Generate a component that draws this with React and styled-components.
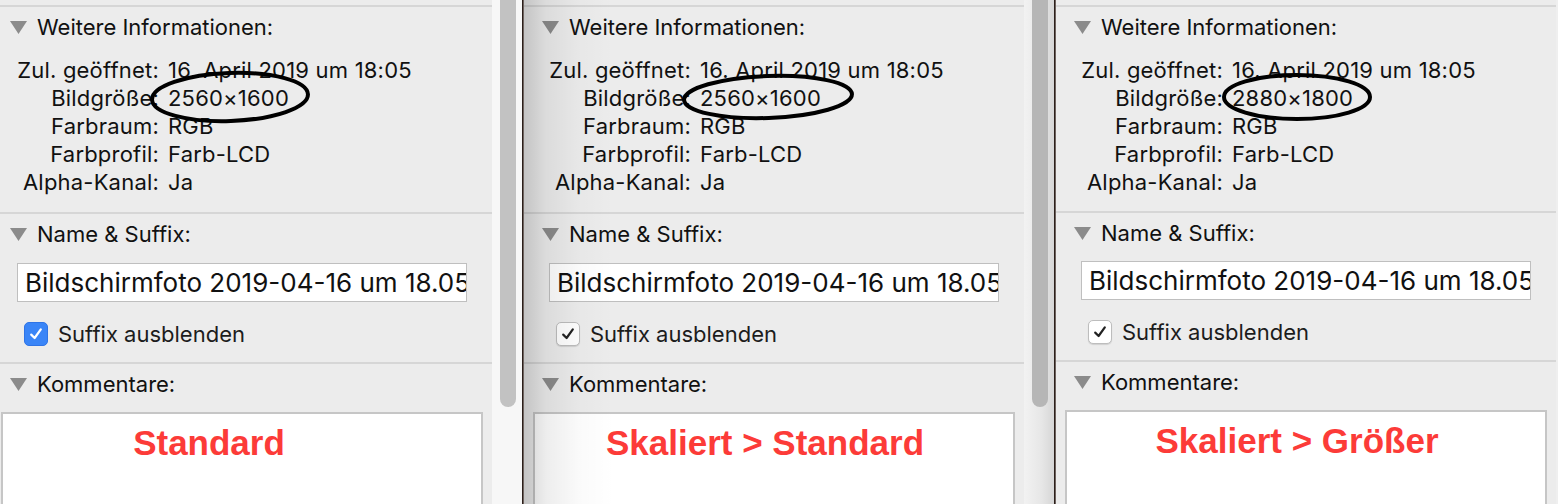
import React from "react"
import styled, { createGlobalStyle } from "styled-components"

const GlobalStyle = createGlobalStyle`
  html, body {
    margin: 0;
    padding: 0;
    background: #ececec;
  }
  body {
    font-family: Inter, "Noto Sans", sans-serif;
    color: #111;
    -webkit-font-smoothing: antialiased;
  }
`

const panels = [
  {
    size: "2560×1600",
    note: "Standard",
    noteShift: 66,
    blue: true,
    ellipse: { cx: 238, cy: 41, rx: 78, ry: 24, rot: -2 },
    track: "#f7f7f7",
    thumb: "#c2c2c2",
  },
  {
    size: "2560×1600",
    note: "Skaliert > Standard",
    noteShift: 18,
    shadow: true,
    ellipse: { cx: 244, cy: 41, rx: 84, ry: 21, rot: -2 },
    track: "linear-gradient(90deg, #f2f2f2 0%, #e6e6e6 60%, #d6d6d6 100%)",
    thumb: "#b6b6b6",
  },
  {
    size: "2880×1800",
    note: "Skaliert > Größer",
    noteShift: 18,
    tight: true,
    ellipse: { cx: 241, cy: 41, rx: 73, ry: 22, rot: 0 },
    track: "#efefef",
    thumb: "#c2c2c2",
  },
]

const Disclosure = () => (
  <svg width="17" height="13" viewBox="0 0 17 13">
    <polygon points="0,0 17,0 8.5,13" fill="#8b8b8b" />
  </svg>
)

const Check = ({ color }) => (
  <svg width="16" height="16" viewBox="0 0 16 16">
    <path
      d="M3.2 8.6 L6.6 12 L12.8 3.4"
      fill="none"
      stroke={color}
      strokeWidth="2.2"
      strokeLinecap="round"
      strokeLinejoin="round"
    />
  </svg>
)

const Panel = ({ data, offset }) => {
  const e = data.ellipse
  return (
    <Window $offset={offset}>
      <Divider />
      <Inspector $shadow={data.shadow}>
        <Section $bottom={data.tight ? 15 : 16}>
          <Header>
            <Disclosure />
            Weitere Informationen:
          </Header>
          <InfoGrid>
            <Label>Zul. geöffnet:</Label>
            <Value>16. April 2019 um 18:05</Value>
            <Label>Bildgröße:</Label>
            <Value>{data.size}</Value>
            <Label>Farbraum:</Label>
            <Value>RGB</Value>
            <Label>Farbprofil:</Label>
            <Value>Farb-LCD</Value>
            <Label>Alpha-Kanal:</Label>
            <Value>Ja</Value>
            <Scribble viewBox="0 0 500 140">
              <ellipse
                cx={e.cx}
                cy={e.cy}
                rx={e.rx}
                ry={e.ry}
                transform={`rotate(${e.rot} ${e.cx} ${e.cy})`}
                fill="none"
                stroke="#000"
                strokeWidth="4"
              />
            </Scribble>
          </InfoGrid>
        </Section>

        <Section $bottom={16}>
          <Header $tight={data.tight}>
            <Disclosure />
            Name &amp; Suffix:
          </Header>
          <NameField>Bildschirmfoto 2019-04-16 um 18.05</NameField>
          <CheckRow>
            <CheckBox $blue={data.blue}>
              <Check color={data.blue ? "#fff" : "#222"} />
            </CheckBox>
            Suffix ausblenden
          </CheckRow>
        </Section>

        <Section $grow>
          <Header>
            <Disclosure />
            Kommentare:
          </Header>
          <CommentBox $shift={data.noteShift}>{data.note}</CommentBox>
        </Section>
      </Inspector>
      <Track $bg={data.track}>
        <Thumb $color={data.thumb} />
      </Track>
    </Window>
  )
}

const App = () => (
  <>
    <GlobalStyle />
    <Stage>
      {panels.map((p, i) => (
        <Panel key={i} data={p} offset={i === 0 ? -10 : 0} />
      ))}
    </Stage>
  </>
)

export default App

// --- Styled Components ---

const Stage = styled.div`
  display: flex;
  width: 1558px;
  height: 504px;
  overflow: hidden;
  background: #ececec;
`

const Window = styled.div`
  display: flex;
  flex-shrink: 0;
  height: 100%;
  margin-left: ${(p) => p.$offset}px;
`

const Divider = styled.div`
  width: 2px;
  flex-shrink: 0;
  background: linear-gradient(90deg, #2b1f1a 0 1px, #6d625e 1px 2px);
`

const Inspector = styled.div`
  position: relative;
  width: 500px;
  flex-shrink: 0;
  display: flex;
  flex-direction: column;
  padding-top: 5px;
  box-sizing: border-box;
  background: #ececec;

  &::after {
    content: "";
    position: absolute;
    inset: 0;
    pointer-events: none;
    display: ${(p) => (p.$shadow ? "block" : "none")};
    background: linear-gradient(
      90deg,
      rgba(0, 0, 0, 0.17) 0px,
      rgba(0, 0, 0, 0.07) 22px,
      rgba(0, 0, 0, 0.02) 55px,
      rgba(0, 0, 0, 0) 90px
    );
  }
`

const Section = styled.section`
  border-top: 2px solid #d6d6d6;
  padding-bottom: ${(p) => (p.$bottom ? p.$bottom : 0)}px;
  display: flex;
  flex-direction: column;
  flex: ${(p) => (p.$grow ? 1 : "none")};
  min-height: 0;
`

const Header = styled.div`
  display: flex;
  align-items: center;
  gap: 10px;
  height: 40px;
  margin-bottom: ${(p) => (p.$tight ? 8 : 9)}px;
  padding-left: 18px;
  font-size: 22px;
  white-space: nowrap;

  svg {
    flex-shrink: 0;
  }
`

const InfoGrid = styled.div`
  position: relative;
  display: grid;
  grid-template-columns: 167px 1fr;
  column-gap: 9px;
  font-size: 22px;
  line-height: 28px;
  letter-spacing: 0.2px;
`

const Label = styled.div`
  text-align: right;
  white-space: nowrap;
`

const Value = styled.div`
  white-space: nowrap;
`

const Scribble = styled.svg`
  position: absolute;
  left: 0;
  top: 0;
  width: 500px;
  height: 140px;
  overflow: visible;
  pointer-events: none;
`

const NameField = styled.div`
  margin-left: 25px;
  width: 450px;
  height: 39px;
  box-sizing: border-box;
  border: 1px solid #bfbfbf;
  background: #fff;
  padding: 0 7px;
  display: flex;
  align-items: center;
  font-size: 26px;
  white-space: nowrap;
  overflow: hidden;
`

const CheckRow = styled.label`
  display: flex;
  align-items: center;
  gap: 10px;
  height: 24px;
  margin-top: 20px;
  padding-left: 32px;
  font-size: 22px;
  color: #1c1c1c;
`

const CheckBox = styled.span`
  width: 24px;
  height: 24px;
  box-sizing: border-box;
  border-radius: 5px;
  display: flex;
  align-items: center;
  justify-content: center;
  background: ${(p) => (p.$blue ? "#3a85f7" : "#fff")};
  border: 1px solid ${(p) => (p.$blue ? "#2f74e6" : "#bdbdbd")};
  box-shadow: ${(p) => (p.$blue ? "none" : "0 1px 1px rgba(0,0,0,0.12)")};
`

const CommentBox = styled.div`
  flex: 1;
  margin-left: 9px;
  margin-top: -1px;
  width: 482px;
  box-sizing: border-box;
  border: 2px solid #c6c6c6;
  border-bottom: none;
  background: #fff;
  padding-top: 11px;
  padding-right: ${(p) => p.$shift}px;
  text-align: center;
  font-family: "Liberation Sans", Arial, sans-serif;
  font-weight: 700;
  font-size: 35px;
  line-height: 35px;
  color: #fc3b38;
  white-space: nowrap;
`

const Track = styled.div`
  width: 30px;
  flex-shrink: 0;
  display: flex;
  flex-direction: column;
  background: ${(p) => p.$bg};
`

const Thumb = styled.div`
  width: 16px;
  height: 420px;
  margin-top: -13px;
  margin-left: 8px;
  border-radius: 8px;
  background: ${(p) => p.$color};
`
